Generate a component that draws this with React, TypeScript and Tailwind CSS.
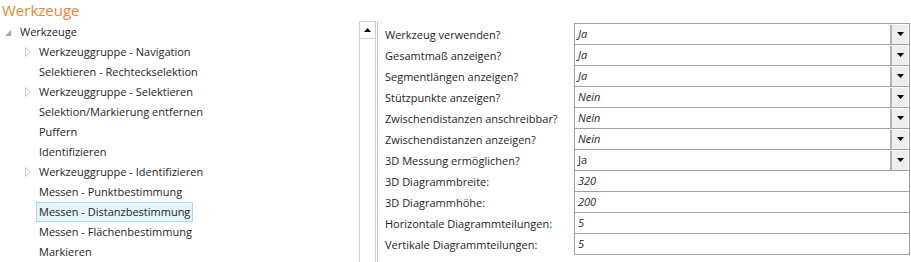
import React from "react";

type TreeItem = { label: string; group?: boolean; selected?: boolean };

const treeItems: TreeItem[] = [
  { label: "Werkzeuggruppe - Navigation", group: true },
  { label: "Selektieren - Rechteckselektion" },
  { label: "Werkzeuggruppe - Selektieren", group: true },
  { label: "Selektion/Markierung entfernen" },
  { label: "Puffern" },
  { label: "Identifizieren" },
  { label: "Werkzeuggruppe - Identifizieren", group: true },
  { label: "Messen - Punktbestimmung" },
  { label: "Messen - Distanzbestimmung", selected: true },
  { label: "Messen - Flächenbestimmung" },
  { label: "Markieren" },
];

type Prop = { label: string; value: string; combo?: boolean; italic?: boolean };

const props: Prop[] = [
  { label: "Werkzeug verwenden?", value: "Ja", combo: true, italic: true },
  { label: "Gesamtmaß anzeigen?", value: "Ja", combo: true, italic: true },
  { label: "Segmentlängen anzeigen?", value: "Ja", combo: true, italic: true },
  { label: "Stützpunkte anzeigen?", value: "Nein", combo: true, italic: true },
  { label: "Zwischendistanzen anschreibbar?", value: "Nein", combo: true, italic: true },
  { label: "Zwischendistanzen anzeigen?", value: "Nein", combo: true, italic: true },
  { label: "3D Messung ermöglichen?", value: "Ja", combo: true },
  { label: "3D Diagrammbreite:", value: "320", italic: true },
  { label: "3D Diagrammhöhe:", value: "200", italic: true },
  { label: "Horizontale Diagrammteilungen:", value: "5", italic: true },
  { label: "Vertikale Diagrammteilungen:", value: "5", italic: true },
];

function CollapsedArrow() {
  return (
    <svg width="6" height="10" viewBox="0 0 6 10" className="absolute left-[25px] top-[5px]">
      <path d="M0.5 0.5 L5.5 5 L0.5 9.5 Z" fill="none" stroke="#c6c6c6" strokeWidth="1" />
    </svg>
  );
}

function ExpandedArrow() {
  return (
    <svg width="6" height="6" viewBox="0 0 6 6" className="absolute left-[5px] top-[8px]">
      <path d="M6 0 L6 6 L0 6 Z" fill="#a8a8a8" />
    </svg>
  );
}

function DownArrow() {
  return (
    <svg width="7" height="4" viewBox="0 0 7 4">
      <path d="M0 0 L7 0 L3.5 4 Z" fill="#000" />
    </svg>
  );
}

export default function App() {
  return (
    <div
      className="w-[911px] h-[262px] bg-white overflow-hidden text-[11px] text-[#1e1e1e]"
      style={{ fontFamily: '"Open Sans", "Noto Sans", sans-serif' }}
    >
      <div className="h-[21px] pl-[2px] text-[15px] leading-[20px] text-[#ee8434]">Werkzeuge</div>

      <div className="flex h-[241px]">
        {/* tree */}
        <div className="w-[359px] pt-[1px]">
          <div className="relative h-[20px] leading-[20px] pl-[20px]">
            <ExpandedArrow />
            Werkzeuge
          </div>
          {treeItems.map((it) => (
            <div key={it.label} className="relative h-[20px]">
              {it.group && <CollapsedArrow />}
              <span
                className={
                  "ml-[36px] inline-block h-[20px] leading-[18px] px-[2px] border " +
                  (it.selected ? "border-[#a9d8f4] bg-[#e5f3fb]" : "border-transparent")
                }
              >
                {it.label}
              </span>
            </div>
          ))}
        </div>

        {/* scrollbar */}
        <div className="w-[17px] border-x border-[#d0d0d0]">
          <div className="h-[18px] border-b border-[#d0d0d0] border-t flex items-center justify-center">
            <svg width="7" height="4" viewBox="0 0 7 4">
              <path d="M0 4 L7 4 L3.5 0 Z" fill="#000" />
            </svg>
          </div>
        </div>

        {/* property grid */}
        <div className="ml-[1px] border-l border-[#c8c8c8] flex-1 pt-[2px] pl-[7px]">
          {props.map((p, i) => (
            <div key={p.label} className="flex h-[21px]">
              <div className="w-[189px] leading-[21px] pt-[1px] whitespace-nowrap">{p.label}</div>
              <div
                className={
                  "w-[336px] flex items-center border-x border-t border-[#a0a0a0] " +
                  (i === props.length - 1 ? "border-b h-[22px]" : "h-[21px]")
                }
              >
                <span className={"flex-1 pl-[3px] leading-[20px] " + (p.italic ? "italic" : "")}>
                  {p.value}
                </span>
                {p.combo && (
                  <div className="w-[18px] h-[19px] mr-[1px] bg-[#ededed] border-l-2 border-[#b4b4b4] flex items-center justify-center">
                    <DownArrow />
                  </div>
                )}
              </div>
            </div>
          ))}
        </div>
      </div>
    </div>
  );
}
